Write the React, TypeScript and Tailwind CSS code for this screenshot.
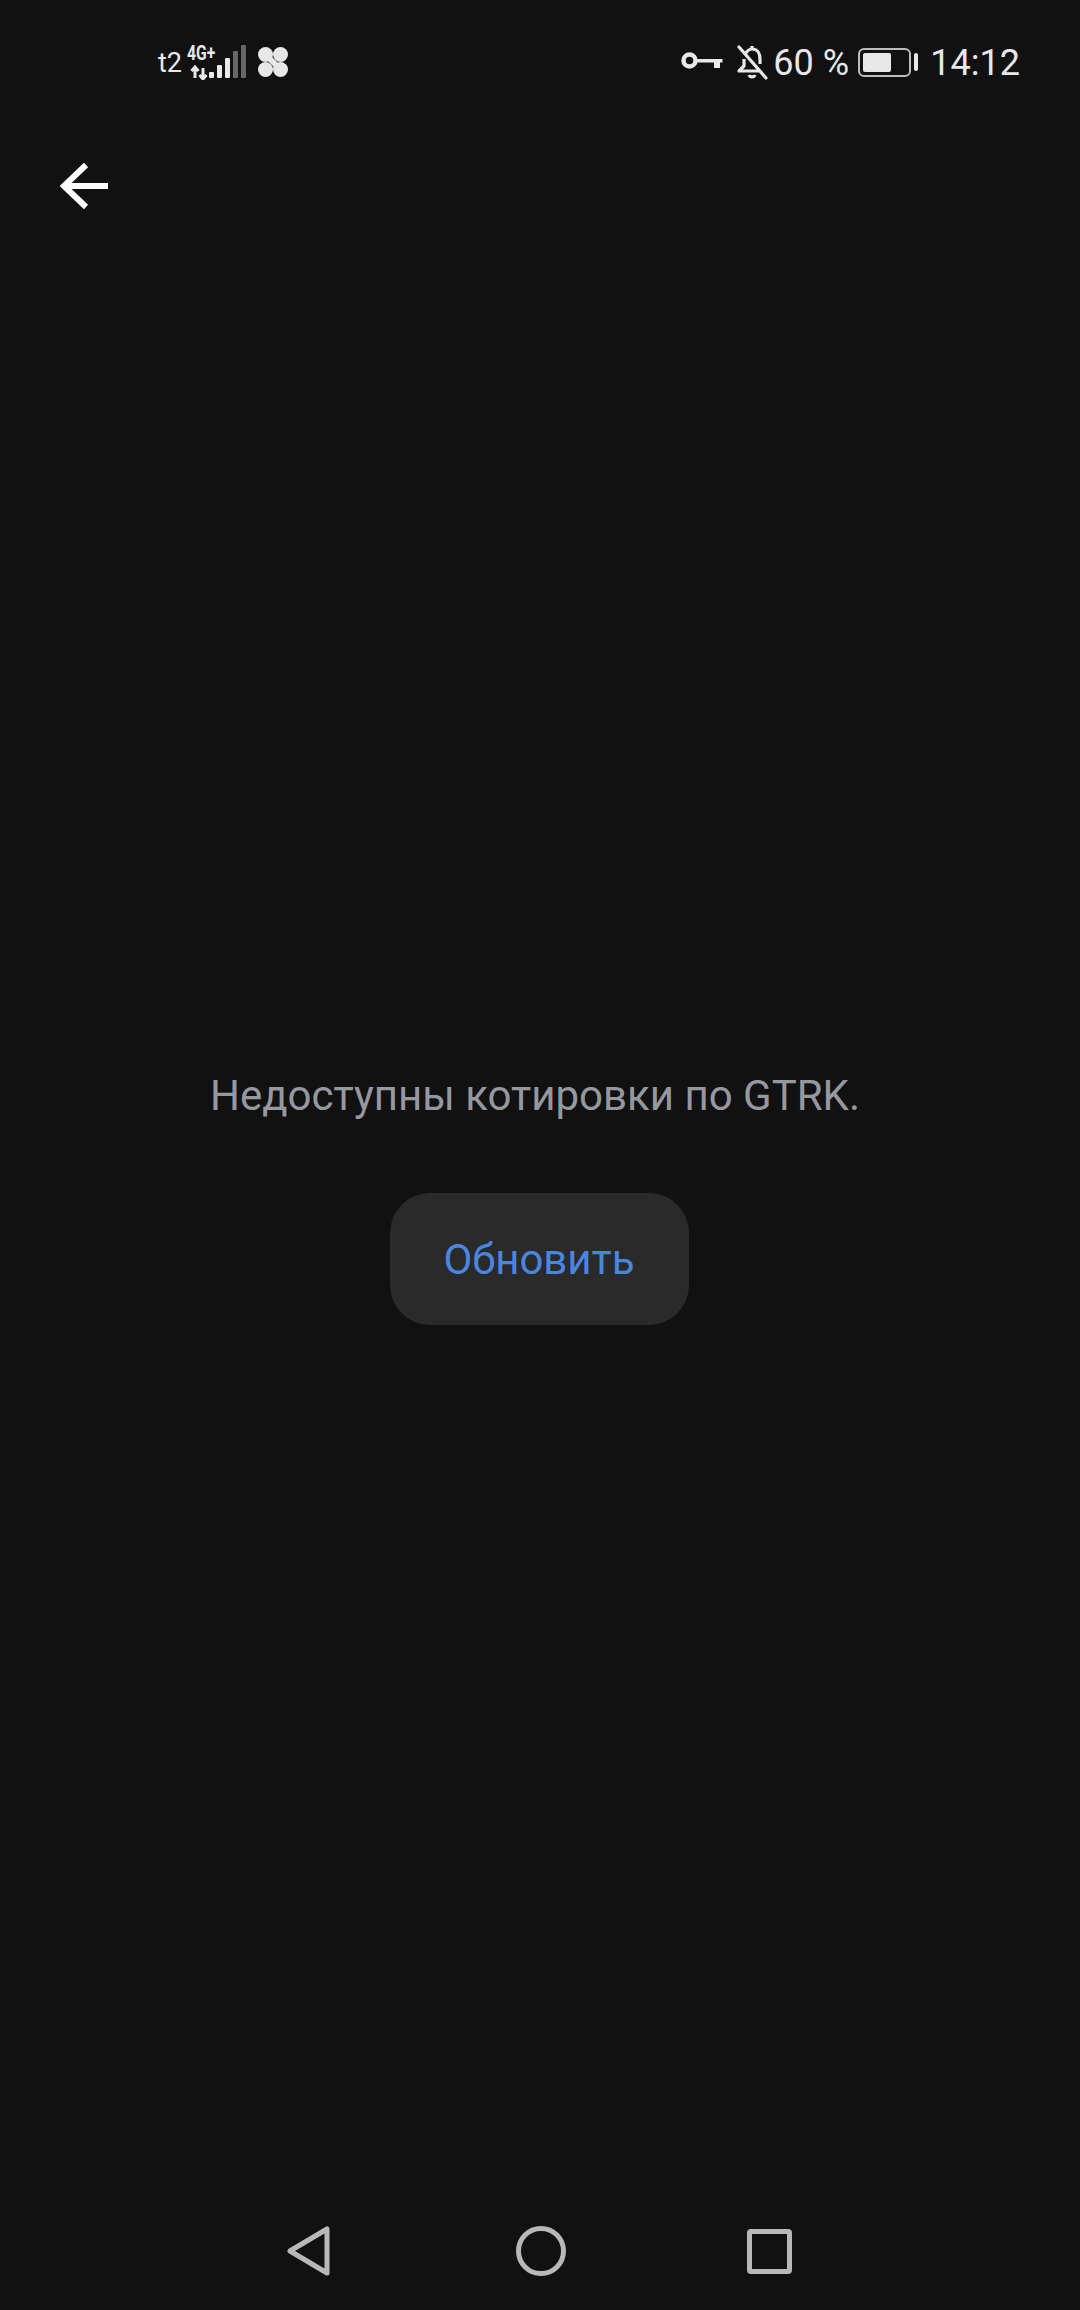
export default function App() {
  const font = { fontFamily: "Roboto, 'Noto Sans', sans-serif" };
  return (
    <div style={font} className="w-[1080px] h-[2310px] bg-[#111111] flex flex-col overflow-hidden">
      {/* status bar */}
      <div className="h-[124px] pl-[158px] pr-[60px] flex items-start justify-between pt-[44px] text-[#e8e8e8]">
        <div className="flex items-center h-[36px]">
          <span className="text-[27px] leading-[36px] w-[29px] mt-[2px]">t2</span>
          <div className="relative w-[66px] h-[36px]">
            <span className="absolute left-0 top-[0px] text-[21px] leading-[18px] font-bold origin-left scale-x-75">4G+</span>
            <svg className="absolute left-0 top-0" width="66" height="36" viewBox="0 0 66 36" fill="none">
              <path d="M8 34V24M4.500 27l3.500-4 3.500 4" stroke="#e8e8e8" strokeWidth="3" />
              <path d="M16 24v10M12.500 31l3.500 4 3.500-4" stroke="#e8e8e8" strokeWidth="3" />
              <rect x="22" y="28" width="5" height="6" rx="1" fill="#e8e8e8" />
              <rect x="30" y="21" width="5" height="13" rx="1" fill="#e8e8e8" />
              <rect x="38" y="14" width="5" height="20" rx="1" fill="#e8e8e8" />
              <rect x="46" y="7" width="5" height="27" rx="1" fill="#666666" />
              <rect x="54" y="1" width="5" height="33" rx="1" fill="#666666" />
            </svg>
          </div>
          <svg className="ml-[5px]" width="30" height="30" viewBox="0 0 30 30" fill="#e8e8e8">
            <circle cx="7.500" cy="7.500" r="7.500" />
            <circle cx="22.500" cy="7.500" r="7.500" />
            <circle cx="7.500" cy="22.500" r="7.500" />
            <circle cx="22.500" cy="22.500" r="7.500" />
            <path d="M7.500 7.500L22.500 22.500" stroke="#e8e8e8" strokeWidth="6" />
          </svg>
        </div>
        <div className="flex items-center h-[36px]">
          <svg width="42" height="20" viewBox="0 0 42 20" fill="none">
            <circle cx="8.500" cy="8.500" r="6" stroke="#e8e8e8" strokeWidth="4.500" />
            <path d="M14 7h27.500v3.500H14z" fill="#e8e8e8" />
            <path d="M33 9h6v7h-6z" fill="#e8e8e8" />
          </svg>
          <svg className="ml-[13px]" width="32" height="36" viewBox="0 0 32 36" fill="none" stroke="#e8e8e8" strokeWidth="3.200" strokeLinejoin="round">
            <path d="M9 10c2-3 4-5 7-5 6 0 8 5 8 10v5M8 15v7l-5 5h20" />
            <path d="M16 5V2" />
            <path d="M13 31c1 2.500 5 2.500 6 0" />
            <path d="M3 3l27 31" strokeLinecap="round" />
          </svg>
          <span className="ml-[5px] text-[36px] leading-[36px] w-[85px] mt-[2px]">60 %</span>
          <div className="w-[53px] h-[29px] border-2 border-[#bdbdbd] rounded-[6px] p-[3px]">
            <div className="w-[28px] h-full bg-[#e8e8e8] rounded-[2px]" />
          </div>
          <div className="ml-[3px] w-[4px] h-[18px] bg-[#e8e8e8] rounded-[2px]" />
          <span className="ml-[12px] text-[36px] leading-[36px] mt-[2px]">14:12</span>
        </div>
      </div>

      {/* app bar */}
      <div className="h-[124px] pl-[58px] pt-[36px]">
        <svg width="54" height="54" viewBox="0 0 54 54" fill="none" stroke="#ffffff" strokeWidth="6">
          <path d="M6 26h44" />
          <path d="M28 5L6 26l22 21" />
        </svg>
      </div>

      {/* message */}
      <div className="flex-1 flex flex-col items-center pt-[823px]">
        <p className="text-[42px] leading-[50px] text-[#95989f] ml-[-10px] whitespace-nowrap">Недоступны котировки по GTRK.</p>
        <button className="mt-[72px] ml-[-2px] w-[299px] h-[132px] rounded-[40px] bg-[#2a2a2a] text-[#4a86e0] text-[42px]">Обновить</button>
      </div>

      {/* navigation bar */}
      <div className="h-[84px] pb-[34px] pr-[4px] flex items-center justify-center">
        <svg width="50" height="54" viewBox="0 0 50 54" fill="none" stroke="#b8b8b8" strokeWidth="5" strokeLinejoin="round" className="mr-[181px]">
          <path d="M5 27L42 5v44z" />
        </svg>
        <svg width="50" height="50" viewBox="0 0 50 50" fill="none" stroke="#b8b8b8" strokeWidth="5" className="mr-[181px]">
          <circle cx="25" cy="25" r="22.500" />
        </svg>
        <div className="w-[45px] h-[45px] border-[5px] border-[#b8b8b8] rounded-[4px]" />
      </div>
    </div>
  );
}
